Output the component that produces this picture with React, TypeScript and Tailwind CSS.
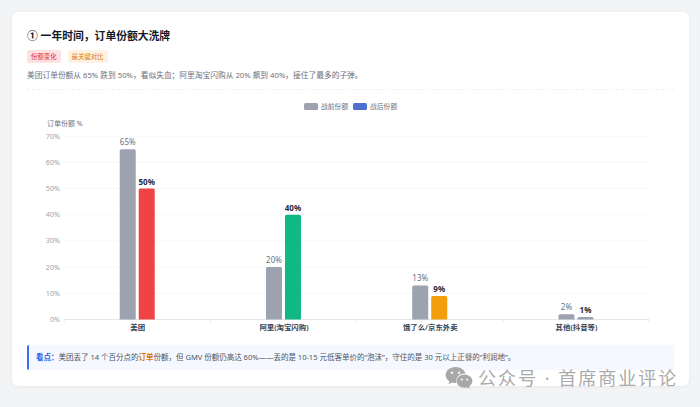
import React from "react"

const font = "'Noto Sans', 'Noto Sans CJK SC', sans-serif"

const groups = [
    { name: "美团", before: 65, after: 50, color: "#ef4444" },
    { name: "阿里(淘宝闪购)", before: 20, after: 40, color: "#10b981" },
    { name: "饿了么/京东外卖", before: 13, after: 9, color: "#f59e0b" },
    { name: "其他(抖音等)", before: 2, after: 1, color: "#9ca3af" },
]

const ticks = [0, 10, 20, 30, 40, 50, 60, 70]

// full-width punctuation, written as escapes so it can't get normalised
const COMMA = "\uFF0C"
const SEMI = "\uFF1B"
const COLON = "\uFF1A"
const STOP = "\u3002"
const LQ = "\u201C"
const RQ = "\u201D"

// chart coords are relative to the svg, which starts at x=27 y=91 on the page
const AXIS_LEFT = 37
const AXIS_RIGHT = 622
const BASE = 229.5
const UNIT = 2.62
const STEP = (AXIS_RIGHT - AXIS_LEFT) / 4

function barPath(x: number, y: number, w: number, h: number) {
    const r = Math.min(1.5, h)
    return `M${x} ${y + h}V${y + r}Q${x} ${y} ${x + r} ${y}H${x + w - r}Q${x + w} ${y} ${x + w} ${y + r}V${y + h}Z`
}

function ShareChart() {
    return (
        <svg width="649" height="245" viewBox="0 0 649 245" className="block" style={{ fontFamily: font }}>
            {/* legend */}
            <rect x="277" y="13" width="14" height="7" rx="1.5" fill="#9ca3af" />
            <text x="294" y="19" fontSize="6.8" fill="#6b7280">战前份额</text>
            <rect x="326" y="13" width="14" height="7" rx="1.5" fill="#4f6fd0" />
            <text x="343" y="19" fontSize="6.8" fill="#6b7280">战后份额</text>

            <text x="20" y="35.5" fontSize="7" fill="#6b7280">订单份额 %</text>

            {ticks.map((t) => (
                <g key={t}>
                    {t > 0 && (
                        <line x1={AXIS_LEFT} x2={AXIS_RIGHT} y1={BASE - t * UNIT} y2={BASE - t * UNIT} stroke="#f6f7f8" strokeWidth="1" />
                    )}
                    <text x="33" y={BASE - t * UNIT + 2.5} fontSize="7.2" textAnchor="end" fill="#9ca3af">{t}%</text>
                </g>
            ))}

            <line x1={AXIS_LEFT} x2={AXIS_RIGHT} y1={BASE} y2={BASE} stroke="#e5e7eb" strokeWidth="1" />
            {[0, 1, 2, 3, 4].map((i) => (
                <line key={i} x1={AXIS_LEFT + i * STEP} x2={AXIS_LEFT + i * STEP} y1={BASE} y2={BASE + 3} stroke="#e5e7eb" strokeWidth="1" />
            ))}

            {groups.map((g, i) => {
                const cx = AXIS_LEFT + STEP * (i + 0.5) + 0.6
                const hb = g.before * UNIT
                const ha = g.after * UNIT
                return (
                    <g key={g.name}>
                        <path d={barPath(cx - 18, BASE - hb, 16, hb)} fill="#9ca3af" />
                        <path d={barPath(cx + 1, BASE - ha, 16, ha)} fill={g.color} />
                        <text x={cx - 10} y={BASE - hb - 4} fontSize="8" textAnchor="middle" fill="#6b7280">{g.before}%</text>
                        <text x={cx + 9} y={BASE - ha - 4} fontSize="8" fontWeight="700" textAnchor="middle" fill="#1f2937">{g.after}%</text>
                        <text x={cx} y={BASE + 10} fontSize="7.4" fontWeight="600" textAnchor="middle" fill="#374151">{g.name}</text>
                    </g>
                )
            })}
        </svg>
    )
}

function WechatMark() {
    return (
        <svg width="28" height="24" viewBox="0 0 28 24" fill="#a8a8a8">
            <path d="M10.5 1C4.9 1 .6 4.6.6 9.1c0 2.6 1.4 4.7 3.8 6.3l-1 2.9 3.4-1.7c1.2.3 2.4.5 3.7.5h.9a7 7 0 0 1-.3-2c0-4.2 3.8-7.6 8.6-7.6h.8C19.6 3.9 15.5 1 10.5 1Z" />
            <path d="M27.4 15.1c0-3.7-3.6-6.7-7.9-6.7s-8 3-8 6.7 3.6 6.7 8 6.7c.9 0 1.8-.1 2.7-.4l2.6 1.4-.7-2.4c2-1.2 3.3-3 3.3-5.3Z" />
            <circle cx="7" cy="6.8" r="1.3" fill="#f4f4f4" />
            <circle cx="14" cy="6.8" r="1.3" fill="#f4f4f4" />
            <circle cx="16.8" cy="13.6" r="1.1" fill="#f4f4f4" />
            <circle cx="22.2" cy="13.6" r="1.1" fill="#f4f4f4" />
        </svg>
    )
}

export default function App() {
    return (
        <div className="relative h-[407px] w-[700px] overflow-hidden bg-[#f3f4f6] pt-[12px] pl-[12px]" style={{ fontFamily: font }}>
            <div className="h-[374px] w-[677px] rounded-[6px] bg-white pt-[16px] pl-[15px] shadow-[0_1px_4px_rgba(0,0,0,0.05)]">
                <h2 className="text-[10.8px] leading-[16px] font-bold text-[#111827]">① 一年时间{COMMA}订单份额大洗牌</h2>
                <div className="mt-[6px] flex gap-[7px]">
                    <span className="flex h-[13px] items-center rounded-[2px] bg-[#fee2e2] px-[4px] text-[6.4px] text-[#dc2626]">份额变化</span>
                    <span className="flex h-[13px] items-center rounded-[2px] bg-[#fef3e2] px-[4px] text-[6.4px] text-[#d97706]">最关键对比</span>
                </div>
                <p className="mt-[6px] text-[7.72px] leading-[12px] text-[#6b7280]">
                    美团订单份额从 65% 跌到 50%{COMMA}看似失血{SEMI}阿里淘宝闪购从 20% 飙到 40%{COMMA}接住了最多的子弹{STOP}
                </p>
                <div className="mt-[8px] w-[647px] border-t border-dashed border-[#f0f1f3]" />
                <ShareChart />
                <div className="mt-[10px] flex h-[25px] w-[647px] items-center rounded-[2px] border-l-2 border-[#3b6ef5] bg-[#f5f8ff] pl-[7px] text-[7.5px] text-[#4b5563]">
                    <span className="font-bold text-[#2563eb]">看点{COLON}</span>
                    <span>
                        美团丢了 14 个百分点的<span className="font-bold text-[#d97706]">订单</span>份额{COMMA}但 GMV 份额仍高达 60%——丢的是 10-15 元低客单价的{LQ}泡沫{RQ}{COMMA}守住的是 30 元以上正餐的{LQ}利润地{RQ}{STOP}
                    </span>
                </div>
            </div>

            {/* watermark over the card corner */}
            <div className="absolute top-[366px] left-[445px] flex items-center gap-[5px]">
                <WechatMark />
                <span className="text-[18px] leading-[24px] tracking-[2px] whitespace-nowrap text-[#aaaaaa]">公众号 · 首席商业评论</span>
            </div>
        </div>
    )
}
